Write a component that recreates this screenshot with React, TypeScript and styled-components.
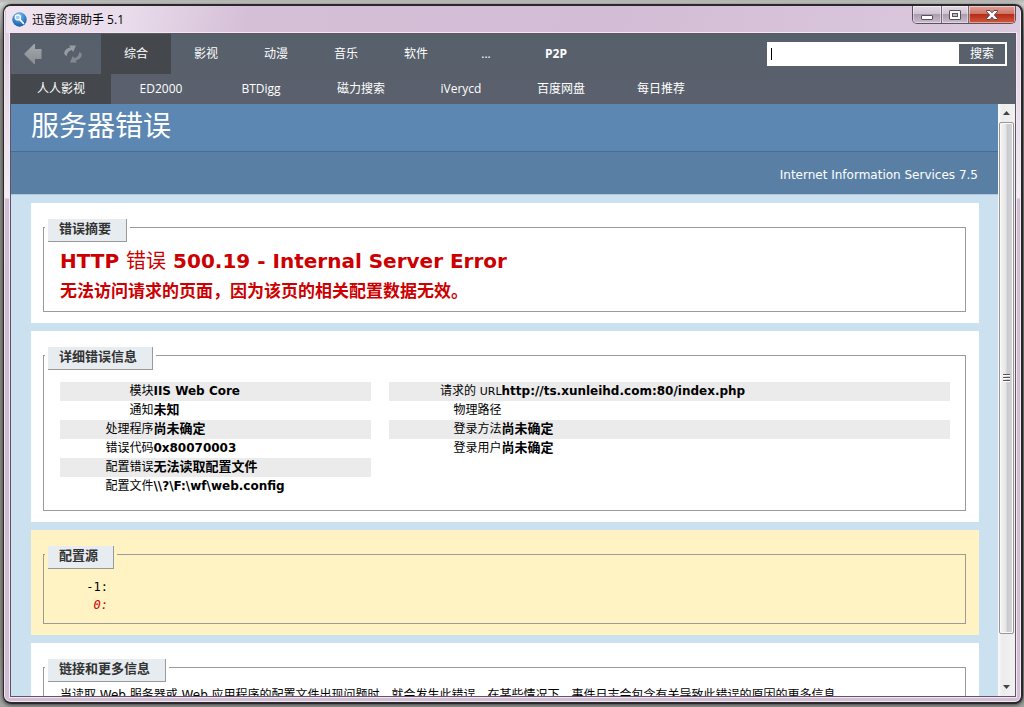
import React from 'react';
import styled, { createGlobalStyle } from 'styled-components';

const UI = '"Open Sans", "Noto Sans", "Noto Sans CJK SC", sans-serif';
const PAGE = '"DejaVu Sans", "Noto Sans CJK SC", sans-serif';

const GlobalStyle = createGlobalStyle`
  *, *::before, *::after { box-sizing: border-box; }
  body {
    margin: 0;
    background: linear-gradient(#b4b4b2, #d2d4d2 4px, #8c8c88 40px, #8a8a86 90%, #a4a4a2);
    font-family: ${PAGE};
    overflow: hidden;
  }
  h1, h2, h3, p { margin: 0; }
  button { padding: 0; border: 0; font: inherit; color: inherit; background: none; }
`;

const Desktop = styled.div`
  height: 100vh;
  padding: 4px 1px 3px 3px;
`;

const Window = styled.div`
  height: 100%;
  display: flex;
  flex-direction: column;
  padding: 0 5px 5px 6px;
  border: 2px solid #2a282b;
  border-left-width: 1px;
  border-radius: 8px;
  background: linear-gradient(#d3bdd5, #e0d0e2 30px, #f3edf4 192px, #d3bdd5 193px);
  box-shadow: inset 0 0 0 1px #f1e8f2, 0 1px 4px #333;
  overflow: hidden;
`;

const TitleBar = styled.header`
  flex: none;
  height: 27px;
  display: flex;
  justify-content: space-between;
  margin: 0 -4px;
  padding: 0 4px 0 5px;
  background: linear-gradient(100deg, #efe4f0, #e9dceb 120px, #d5bfd7 240px, #d3bcd5 60%, #dccade);
`;

const Caption = styled.div`
  display: flex;
  align-items: center;
  gap: 5px;
  padding-left: 1px;
  font: 12px/16px ${UI};
  color: #000;
`;

const WindowButtons = styled.div`
  display: flex;
  height: 18px;
  border: 1px solid #5c5161;
  border-top: 0;
  border-radius: 0 0 5px 5px;
  overflow: hidden;
`;

const WindowButton = styled.button<{ $width: number; $close?: boolean }>`
  width: ${p => p.$width}px;
  display: flex;
  align-items: center;
  justify-content: center;
  border-left: 1px solid #75687a;
  background: ${p => p.$close
    ? 'linear-gradient(#dfa29a, #cf7465 45%, #b72c17 50%, #cf5a3c)'
    : 'linear-gradient(#e4d9e6, #d0c3d3 45%, #ab9cae 50%, #cbbdcd)'};
  box-shadow: inset 0 0 0 1px rgba(255, 255, 255, 0.45);
  &:first-child { border-left: 0; }
`;

const Client = styled.div`
  flex: 1;
  min-height: 0;
  display: flex;
  flex-direction: column;
  border: 1px solid #5f5564;
  outline: 1px solid #f1e8f2;
`;

const Toolbar = styled.nav`
  flex: none;
  background: linear-gradient(#56606b, #5b606d);
  color: #fff;
  font: 12px/16px ${UI};
`;

const ToolRow = styled.div<{ $height: number }>`
  display: flex;
  height: ${p => p.$height}px;
`;

const History = styled.div`
  display: flex;
  width: 90px;
  padding-left: 2px;
`;

const HistoryButton = styled.button`
  width: 40px;
  display: flex;
  align-items: center;
  justify-content: center;
`;

const Tab = styled.button<{ $width: number; $active?: boolean; $bold?: boolean }>`
  width: ${p => p.$width}px;
  background: ${p => (p.$active ? '#44484c' : 'transparent')};
  font-weight: ${p => (p.$bold ? 700 : 400)};
`;

const Search = styled.form`
  display: flex;
  align-items: center;
  width: 240px;
  height: 24px;
  margin: 8px 8px 0 auto;
  padding: 2px;
  background: #fff;
`;

const Caret = styled.span`
  width: 1px;
  height: 12px;
  margin-left: 2px;
  background: #000;
`;

const SearchInput = styled.input`
  flex: 1;
  min-width: 0;
  height: 20px;
  padding: 0 2px;
  border: 0;
  outline: 0;
  font: 12px/16px ${UI};
`;

const SearchButton = styled.button`
  width: 46px;
  height: 20px;
  background: #58606c;
`;

const Browser = styled.div`
  flex: 1;
  min-height: 0;
  display: flex;
  background: #cbe1ef;
`;

const Page = styled.main`
  flex: 1;
  min-width: 0;
  overflow: hidden;
`;

const PageTitle = styled.h1`
  height: 48px;
  padding: 3px 20px 0;
  border-bottom: 1px solid #4a6c8e;
  background: #5c87b2;
  color: #fff;
  font-size: 28px;
  line-height: 40px;
  font-weight: 400;
`;

const ServerLine = styled.div`
  height: 43px;
  padding: 13px 20px 0;
  border-bottom: 1px solid #b3c6dc;
  background: #5a7fa5;
  color: #fff;
  font-size: 12px;
  line-height: 20px;
  text-align: right;
`;

const Cards = styled.div`
  display: flex;
  flex-direction: column;
  gap: 8px;
  padding: 8px 19px 8px 20px;
`;

const Card = styled.section<{ $warm?: boolean }>`
  --card: ${p => (p.$warm ? '#fff3c4' : '#fff')};
  padding: 24px 13px 11px 12px;
  background: var(--card);
`;

const Group = styled.div<{ $bottom: number }>`
  padding: 0 15px ${p => p.$bottom}px 16px;
  border: 1px solid #9b9b9b;
`;

const Legend = styled.h3`
  width: max-content;
  height: 23px;
  margin: -9px 0 0 -12px;
  padding: 0 15px 0 11px;
  border: solid #999;
  border-width: 0 1px 1px 0;
  box-shadow: 0 0 0 3px var(--card);
  background: #e7ecf0;
  color: #333;
  font-size: 13px;
  line-height: 20px;
  font-weight: 700;
`;

const ErrorTitle = styled.h2`
  margin-top: 4px;
  color: #c00;
  font-size: 20px;
  line-height: 30px;
  font-weight: 700;
`;

const Light = styled.span`
  font-weight: 400;
`;

const ErrorText = styled.h3`
  color: #c00;
  font-size: 17px;
  line-height: 30px;
  font-weight: 700;
`;

const Details = styled.div`
  display: grid;
  grid-template-columns: 35fr 63fr;
  column-gap: 18px;
  align-items: start;
  margin-top: 12px;
`;

const Table = styled.table<{ $label: number }>`
  width: 100%;
  table-layout: fixed;
  border-collapse: collapse;
  font-size: 12px;
  line-height: 18px;
  color: #000;
  tr:nth-child(odd) { background: #ebebeb; }
  th, td { height: 19px; padding: 0; white-space: nowrap; vertical-align: top; }
  th { width: ${p => p.$label}%; font-weight: 400; text-align: right; }
`;

const Value = styled.td<{ $latin: boolean }>`
  font-size: ${p => (p.$latin ? 12 : 13)}px;
  font-weight: 700;
`;

const Latin = styled.span`
  font-size: 11px;
`;

const Source = styled.div`
  margin-top: 9px;
  font: 12px/18px "DejaVu Sans Mono", monospace;
  color: #000;
`;

const SourceLine = styled.div<{ $error?: boolean }>`
  width: 48px;
  text-align: right;
  color: ${p => (p.$error ? '#c00' : '#000')};
  font-style: ${p => (p.$error ? 'italic' : 'normal')};
`;

const Info = styled.p`
  margin-top: 3px;
  font-size: 12px;
  line-height: 20px;
  white-space: nowrap;
  color: #000;
`;

const Scrollbar = styled.div`
  flex: none;
  width: 17px;
  display: flex;
  flex-direction: column;
  background: linear-gradient(90deg, #fafafa, #ececec 4px, #f1f1f1);
`;

const ScrollArrow = styled.button`
  height: 18px;
  display: flex;
  align-items: center;
  justify-content: center;
`;

const ScrollTrack = styled.div`
  flex: 1;
  padding-left: 1px;
`;

const ScrollThumb = styled.div`
  height: 92%;
  width: 15px;
  display: flex;
  align-items: center;
  justify-content: center;
  border: 1px solid #979797;
  border-radius: 2px;
  box-shadow: inset 0 0 0 1px #fafafa;
  background: linear-gradient(90deg, #f5f5f5, #e6e6e8 45%, #c9cacd 55%, #d6d7da);
`;

const MAIN_TABS = ['综合', '影视', '动漫', '音乐', '软件', '...', 'P2P'];
const SITE_TABS = ['人人影视', 'ED2000', 'BTDigg', '磁力搜索', 'iVerycd', '百度网盘', '每日推荐'];

type Row = { label: React.ReactNode; value: string; latin?: boolean };

const MODULE_ROWS: Row[] = [
  { label: '模块', value: 'IIS Web Core', latin: true },
  { label: '通知', value: '未知' },
  { label: '处理程序', value: '尚未确定' },
  { label: '错误代码', value: '0x80070003', latin: true },
  { label: '配置错误', value: '无法读取配置文件' },
  { label: '配置文件', value: '\\\\?\\F:\\wf\\web.config', latin: true },
];

const REQUEST_ROWS: Row[] = [
  { label: <>请求的 <Latin>URL</Latin></>, value: 'http://ts.xunleihd.com:80/index.php', latin: true },
  { label: '物理路径', value: '' },
  { label: '登录方法', value: '尚未确定' },
  { label: '登录用户', value: '尚未确定' },
];

function DetailTable({ rows, label }: { rows: Row[]; label: number }) {
  return (
    <Table $label={label}>
      <tbody>
        {rows.map((row, i) => (
          <tr key={i}>
            <th scope="row">{row.label}</th>
            <Value $latin={!!row.latin}>{row.value}</Value>
          </tr>
        ))}
      </tbody>
    </Table>
  );
}

function AppIcon() {
  return (
    <svg width="15" height="15" viewBox="0 0 15 15">
      <defs>
        <radialGradient id="ball" cx="45%" cy="25%" r="80%">
          <stop offset="0" stopColor="#8cc8f2" />
          <stop offset="0.5" stopColor="#3c8ad0" />
          <stop offset="1" stopColor="#144f9c" />
        </radialGradient>
      </defs>
      <circle cx="7.5" cy="7.5" r="7.2" fill="url(#ball)" />
      <circle cx="5.8" cy="5.4" r="2.6" fill="#9fd0f2" stroke="#fff" strokeWidth="1.2" />
      <path d="M7.8 7.5 L11.4 11.3" stroke="#fff" strokeWidth="1.8" strokeLinecap="round" />
    </svg>
  );
}

function BackIcon() {
  return (
    <svg width="18" height="20" viewBox="0 0 18 20">
      <defs>
        <linearGradient id="metal" x1="0" y1="0" x2="0" y2="1">
          <stop offset="0" stopColor="#a4a7ab" />
          <stop offset="1" stopColor="#898d92" />
        </linearGradient>
      </defs>
      <path d="M0 10 L10 0 H11 V5 H17.500 V15 H11 V20 H10 Z" fill="url(#metal)" />
    </svg>
  );
}

function RefreshIcon() {
  return (
    <svg width="18" height="18" viewBox="0 0 18 18">
      <path d="M2 10.800 L0.300 9 C0 5.800 2.500 3.200 6.500 2.600 L5 0.400 H12 L9.200 7 L7.800 4.900 C5 5.600 3 7.500 2.800 10.800 Z" fill="#989ca0" />
      <path d="M16 7.200 L17.700 9 C18 12.200 15.500 14.800 11.500 15.400 L13 17.600 H6 L8.800 11 L10.200 13.100 C13 12.400 15 10.500 15.200 7.200 Z" fill="#858a90" />
    </svg>
  );
}

export default function App() {
  return (
    <>
      <GlobalStyle />
      <Desktop>
        <Window>
          <TitleBar>
            <Caption><AppIcon />迅雷资源助手 5.1</Caption>
            <WindowButtons>
              <WindowButton $width={28} aria-label="最小化">
                <svg width="12" height="14" viewBox="0 0 12 14">
                  <rect x="0.5" y="7.500" width="11" height="4" rx="0.5" fill="#fff" stroke="#575062" />
                </svg>
              </WindowButton>
              <WindowButton $width={27} aria-label="最大化">
                <svg width="12" height="10" viewBox="0 0 12 10">
                  <rect x="0.5" y="0.5" width="11" height="9" rx="0.5" fill="#fff" stroke="#575062" />
                  <rect x="3.500" y="3.500" width="5" height="3" fill="#c4b8c8" stroke="#575062" />
                </svg>
              </WindowButton>
              <WindowButton $width={47} $close aria-label="关闭">
                <svg width="12" height="10" viewBox="0 0 12 10">
                  <path d="M0.500 0.500 H4 L6 2.800 L8 0.500 H11.500 V1.500 L8.400 5 L11.500 8.500 V9.500 H8 L6 7.200 L4 9.500 H0.500 V8.500 L3.600 5 L0.500 1.500 Z" fill="#fff" stroke="#5a4550" />
                </svg>
              </WindowButton>
            </WindowButtons>
          </TitleBar>
          <Client>
            <Toolbar>
              <ToolRow $height={40}>
                <History>
                  <HistoryButton aria-label="后退"><BackIcon /></HistoryButton>
                  <HistoryButton aria-label="刷新"><RefreshIcon /></HistoryButton>
                </History>
                {MAIN_TABS.map((name, i) => (
                  <Tab key={name} $width={70} $active={i === 0} $bold={name === 'P2P'}>{name}</Tab>
                ))}
                <Search onSubmit={e => e.preventDefault()}>
                  <Caret />
                  <SearchInput type="text" aria-label="搜索" />
                  <SearchButton type="submit">搜索</SearchButton>
                </Search>
              </ToolRow>
              <ToolRow $height={30}>
                {SITE_TABS.map((name, i) => (
                  <Tab key={name} $width={100} $active={i === 0}>{name}</Tab>
                ))}
              </ToolRow>
            </Toolbar>
            <Browser>
              <Page>
                <PageTitle>服务器错误</PageTitle>
                <ServerLine>Internet Information Services 7.5</ServerLine>
                <Cards>
                  <Card>
                    <Group $bottom={5}>
                      <Legend>错误摘要</Legend>
                      <ErrorTitle>HTTP <Light>错误</Light> 500.19 - Internal Server Error</ErrorTitle>
                      <ErrorText>无法访问请求的页面，因为该页的相关配置数据无效。</ErrorText>
                    </Group>
                  </Card>
                  <Card>
                    <Group $bottom={14}>
                      <Legend>详细错误信息</Legend>
                      <Details>
                        <DetailTable rows={MODULE_ROWS} label={30} />
                        <DetailTable rows={REQUEST_ROWS} label={20} />
                      </Details>
                    </Group>
                  </Card>
                  <Card $warm>
                    <Group $bottom={9}>
                      <Legend>配置源</Legend>
                      <Source>
                        <SourceLine>-1:</SourceLine>
                        <SourceLine $error>0:</SourceLine>
                      </Source>
                    </Group>
                  </Card>
                  <Card>
                    <Group $bottom={12}>
                      <Legend>链接和更多信息</Legend>
                      <Info>
                        当读取 Web 服务器或 Web 应用程序的配置文件出现问题时，就会发生此错误。在某些情况下，事件日志会包含有关导致此错误的原因的更多信息。
                      </Info>
                    </Group>
                  </Card>
                </Cards>
              </Page>
              <Scrollbar>
                <ScrollArrow aria-label="向上滚动">
                  <svg width="7" height="4" viewBox="0 0 7 4"><path d="M0 4 L3.500 0 L7 4 Z" fill="#444" /></svg>
                </ScrollArrow>
                <ScrollTrack>
                  <ScrollThumb>
                    <svg width="7" height="8" viewBox="0 0 7 8">
                      <path d="M0 0.500 H7 M0 3.500 H7 M0 6.500 H7" stroke="#555" />
                      <path d="M0 1.500 H7 M0 4.500 H7 M0 7.500 H7" stroke="#fff" />
                    </svg>
                  </ScrollThumb>
                </ScrollTrack>
                <ScrollArrow aria-label="向下滚动">
                  <svg width="7" height="4" viewBox="0 0 7 4"><path d="M0 0 L3.500 4 L7 0 Z" fill="#444" /></svg>
                </ScrollArrow>
              </Scrollbar>
            </Browser>
          </Client>
        </Window>
      </Desktop>
    </>
  );
}
